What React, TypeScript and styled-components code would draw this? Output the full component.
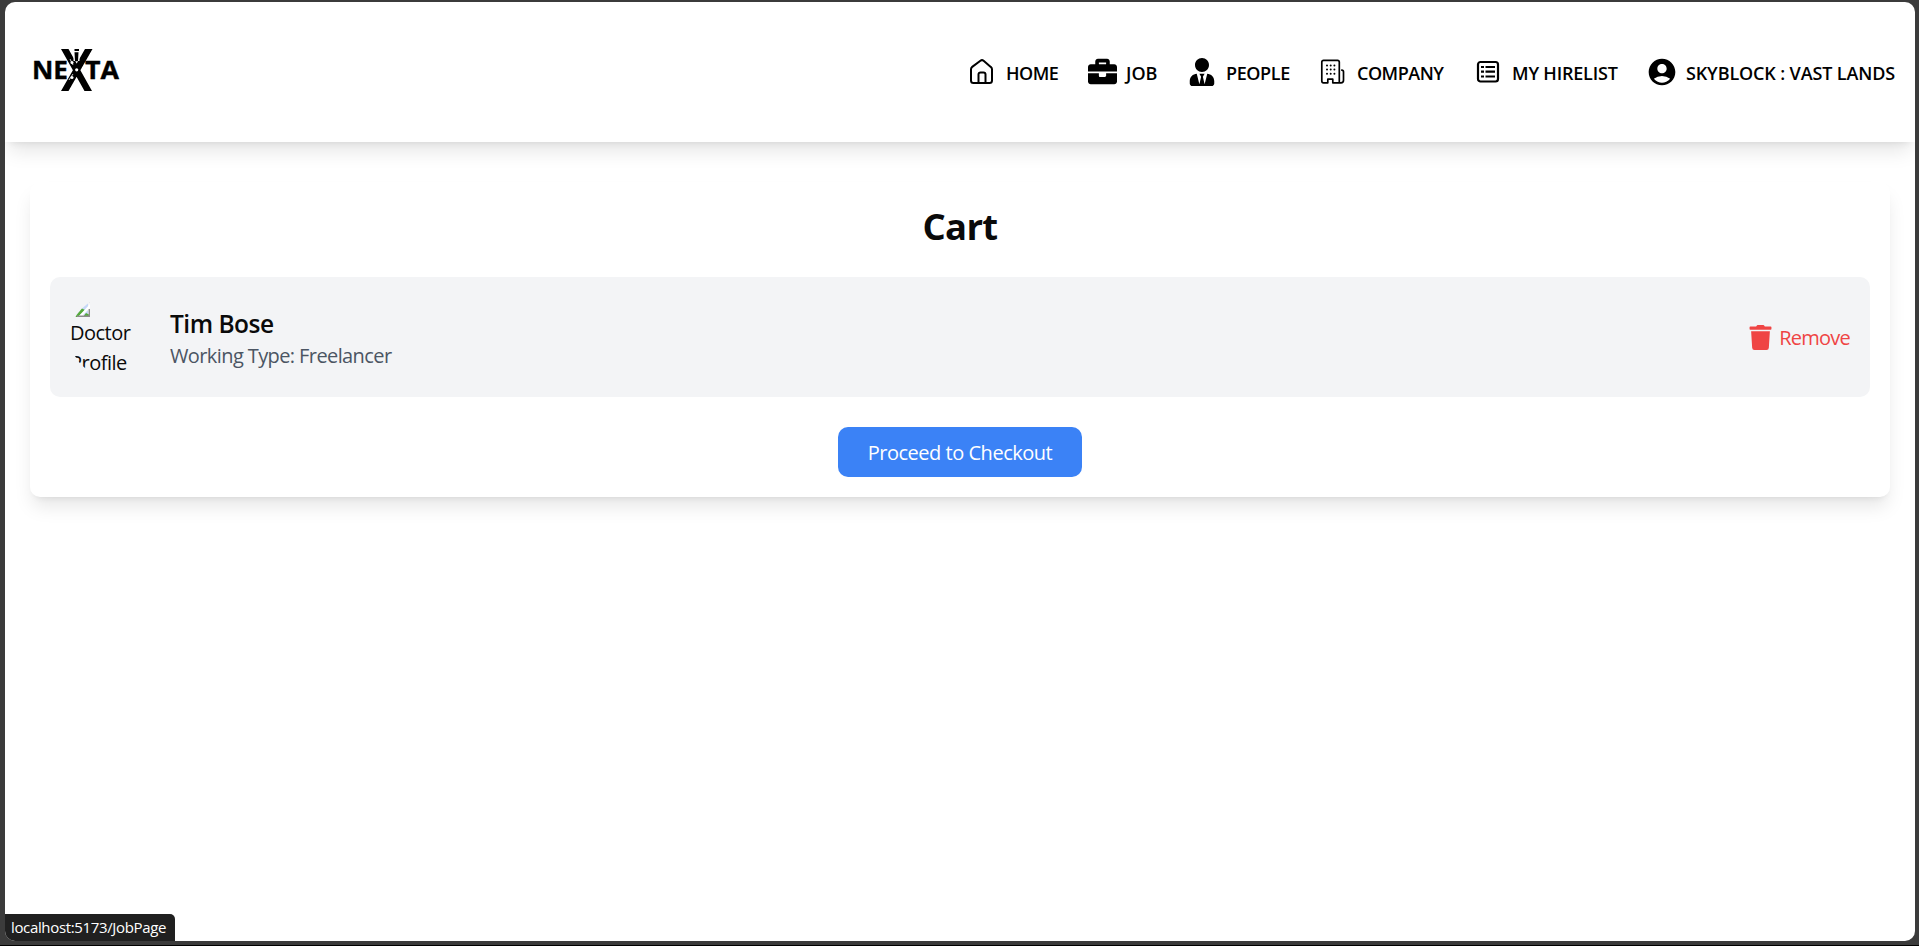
import React from "react";
import styled, { createGlobalStyle } from "styled-components";
import { FaBriefcase, FaTrash, FaUserTie } from "react-icons/fa";
import { MdAccountCircle } from "react-icons/md";

const GlobalStyle = createGlobalStyle`
  *, *::before, *::after { box-sizing: border-box; }
  html, body { margin: 0; background: #3b3b3b; }
  body {
    font-family: "Segoe UI", "Open Sans", "Noto Sans", sans-serif;
    font-size: 20px;
    line-height: 30px;
    color: #0a0a0a;
  }
`;

const BrowserFrame = styled.div`
  height: 946px;
  padding: 2px 4px 4px 5px;
  border-bottom: 1px solid #000;
  overflow: hidden;
`;

const Page = styled.div`
  position: relative;
  height: 939px;
  background: #fff;
  border-radius: 10px;
  overflow: hidden;
`;

const Header = styled.header`
  display: flex;
  align-items: center;
  justify-content: space-between;
  height: 140px;
  padding: 0 20px 2px 27px;
  box-shadow: 0 12.5px 18.75px -3.75px rgba(0, 0, 0, 0.1), 0 5px 7.5px -5px rgba(0, 0, 0, 0.1);
`;

const Nav = styled.nav`
  display: flex;
  gap: 29px;
`;

const NavLink = styled.a`
  display: flex;
  align-items: center;
  color: #000;
`;

const NavIcon = styled.span`
  display: flex;
  align-items: center;
  justify-content: center;
  width: 28px;
  height: 32px;
  margin-right: 10px;
  padding-top: 1px;

  svg {
    flex: none;
    display: block;
  }
`;

const NavLabel = styled.span<{ $width: number; $tracking: number }>`
  width: ${(p) => p.$width}px;
  padding-top: 4px;
  font-size: 18px;
  font-weight: 600;
  line-height: 28px;
  letter-spacing: ${(p) => p.$tracking}px;
  white-space: nowrap;
`;

const CartCard = styled.main`
  margin: 40px 25px 0;
  height: 315px;
  padding: 20px;
  border-radius: 10px;
  background: #fff;
  box-shadow: 0 12.5px 18.75px -3.75px rgba(0, 0, 0, 0.1), 0 5px 7.5px -5px rgba(0, 0, 0, 0.1);
`;

const Title = styled.h1`
  margin: 2px 0 28px;
  font-size: 36.5px;
  line-height: 45px;
  font-weight: 700;
  letter-spacing: -0.7px;
  text-align: center;
`;

const CartRow = styled.section`
  display: flex;
  align-items: center;
  height: 120px;
  padding: 20px;
  border-radius: 10px;
  background: #f3f4f6;
`;

const Avatar = styled.div`
  width: 80px;
  height: 80px;
  border-radius: 50%;
  overflow: hidden;
  margin-right: 20px;
  letter-spacing: -0.5px;
`;

const AvatarImage = styled.div`
  height: 21px;
  svg { display: block; }
`;

const AvatarText = styled.div`
  width: 70px;
  line-height: 30px;
`;

const Person = styled.div`
  flex: 1;
  padding-top: 2px;
`;

const Name = styled.h2`
  margin: 0;
  font-size: 24.5px;
  line-height: 35px;
  font-weight: 600;
  letter-spacing: -0.5px;
`;

const WorkType = styled.p`
  margin: 0;
  color: #4b5563;
  letter-spacing: -0.6px;
`;

const RemoveButton = styled.button`
  display: flex;
  align-items: center;
  gap: 6px;
  padding: 1px 0 0;
  border: 0;
  background: none;
  color: #ef4444;
  font: inherit;
  letter-spacing: -0.75px;
`;

const CheckoutButton = styled.button`
  display: block;
  width: 244px;
  height: 50px;
  margin: 30px auto 0;
  padding: 2px 0 0;
  border: 0;
  border-radius: 10px;
  background: #3b82f6;
  color: #fff;
  font: inherit;
  letter-spacing: -0.48px;
`;

const StatusBar = styled.div`
  position: absolute;
  left: 0;
  bottom: 0;
  width: 170px;
  height: 27px;
  padding-left: 6px;
  border-top-right-radius: 5px;
  background: #202020;
  color: #fff;
  font-size: 15px;
  line-height: 27px;
  letter-spacing: -0.35px;
  white-space: nowrap;
`;

const Logo = () => (
  <svg width="88" height="46" viewBox="0 0 88 46" role="img" aria-label="Nexta">
    <g fontFamily='"Open Sans", sans-serif' fontWeight="700" fontSize="25.5" stroke="#000" strokeWidth=".4">
      <text x="0" y="31" textLength="36" lengthAdjust="spacingAndGlyphs">NE</text>
      <text x="53" y="31" textLength="34" lengthAdjust="spacingAndGlyphs">TA</text>
    </g>
    <path d="M29 1h7.500L60 43h-7.500zM53 1h7.500L36.500 43H29z" />
    <path d="M41.500 1h6v12h-6z" fill="#fff" />
    <path d="M42.500 1h4.500v2h-4.500zM42.500 4.200h4l-.5 9h-3z" />
    <g fill="#fff">
      <circle cx="40" cy="14.500" r="1.500" />
      <circle cx="44.700" cy="21.800" r="1.600" />
      <circle cx="40" cy="29.500" r="1.500" />
    </g>
    <path d="M38 11l3 6M37 32l4-6" stroke="#fff" strokeWidth=".8" />
  </svg>
);

const HomeIcon = () => (
  <svg width="28" height="28" viewBox="0 0 28 28" fill="none" stroke="#000" strokeWidth="2" strokeLinejoin="round">
    <path d="M3 11.300c0-1 .4-1.800 1.200-2.400l8.200-6.200c1-.7 2.200-.7 3.200 0l7.200 6.200c.8.6 1.200 1.400 1.200 2.400v11.200c0 1.500-1 2.500-2.500 2.500h-16C4 25 3 24 3 22.500z" />
    <path d="M10.500 25v-8.500c0-1.200.8-2 2-2h3c1.200 0 2 .8 2 2V25" />
  </svg>
);

const BuildingIcon = () => (
  <svg width="28" height="28" viewBox="0 0 28 28" fill="none" stroke="#000" strokeWidth="1.700" strokeLinejoin="round" strokeLinecap="round">
    <path d="M20.300 24.800V4c0-1-.7-1.700-1.700-1.700H4.500c-1 0-1.700.7-1.700 1.700v19.100c0 1 .7 1.700 1.700 1.700h4.300v-3.600h5v3.600H22c1.600 0 2.500-1 2.500-2.500v-8.500c0-1-.7-1.700-1.700-1.700" />
    <path d="M8 7.500h.01M11.700 7.500h.01M15.400 7.500h.01M8 11.600h.01M11.700 11.600h.01M15.400 11.600h.01M8 15.700h.01M11.700 15.700h.01M15.400 15.700h.01" strokeWidth="2" />
  </svg>
);

const ListIcon = () => (
  <svg width="28" height="28" viewBox="0 0 28 28" fill="none" stroke="#000" strokeWidth="2.200">
    <rect x="4" y="4" width="20" height="19.500" rx="2.500" />
    <path d="M7 9h3M7 13.700h3M7 18.500h3M11.500 9H21M11.500 13.700H21M11.500 18.500H21" />
  </svg>
);

const BrokenImage = () => (
  <svg width="20" height="20" viewBox="0 0 20 20">
    <path d="M1 2h17v16H1z" fill="#c6d8f7" />
    <path d="M1 20h7l7-7-4-2L1 18z" fill="#55ab3a" />
    <path d="M8 20L20 7v4l-9 9z" fill="#fff" />
    <path d="M13 20l3-4 4 2v2z" fill="#55ab3a" />
    <path d="M19.300 1v4.500M19.300 12v7.300H7" fill="none" stroke="#8c8c8c" strokeWidth="1.400" />
  </svg>
);

const links = [
  { label: "HOME", icon: <HomeIcon />, width: 53, tracking: -0.5 },
  { label: "JOB", icon: <FaBriefcase size={29} />, width: 33, tracking: 0 },
  { label: "PEOPLE", icon: <FaUserTie size={28} />, width: 64, tracking: -0.4 },
  { label: "COMPANY", icon: <BuildingIcon />, width: 88, tracking: -0.5 },
  { label: "MY HIRELIST", icon: <ListIcon />, width: 107, tracking: -0.2 },
  { label: "SKYBLOCK : VAST LANDS", icon: <MdAccountCircle size={32} />, width: 209, tracking: -0.13 },
];

export default function App() {
  return (
    <>
      <GlobalStyle />
      <BrowserFrame>
        <Page>
          <Header>
            <Logo />
            <Nav>
              {links.map((link) => (
                <NavLink key={link.label}>
                  <NavIcon>{link.icon}</NavIcon>
                  <NavLabel $width={link.width} $tracking={link.tracking}>{link.label}</NavLabel>
                </NavLink>
              ))}
            </Nav>
          </Header>
          <CartCard>
            <Title>Cart</Title>
            <CartRow>
              <Avatar>
                <AvatarImage><BrokenImage /></AvatarImage>
                <AvatarText>Doctor Profile</AvatarText>
              </Avatar>
              <Person>
                <Name>Tim Bose</Name>
                <WorkType>Working Type: Freelancer</WorkType>
              </Person>
              <RemoveButton><FaTrash size={25} />Remove</RemoveButton>
            </CartRow>
            <CheckoutButton>Proceed to Checkout</CheckoutButton>
          </CartCard>
          <StatusBar>localhost:5173/JobPage</StatusBar>
        </Page>
      </BrowserFrame>
    </>
  );
}
